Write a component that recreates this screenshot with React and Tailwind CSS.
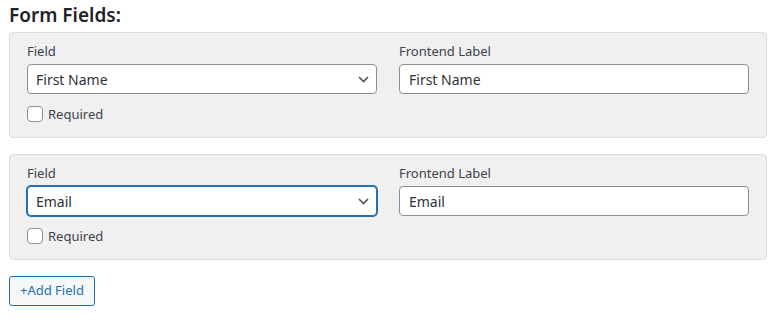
const fields = [
  { field: "First Name", label: "First Name", focused: false },
  { field: "Email", label: "Email", focused: true },
];

function Chevron() {
  return (
    <svg width="11" height="7" viewBox="0 0 11 7" className="shrink-0">
      <polyline points="1,1 5.5,5.5 10,1" fill="none" stroke="#50575e" strokeWidth="1.7" />
    </svg>
  );
}

function FieldRow({ field, label, focused }) {
  return (
    <div className="bg-[#f0f0f1] border border-[#dcdcde] rounded-[4px] px-[17px] pt-[9px] pb-[15px]">
      <div className="grid grid-cols-2 gap-[22px]">
        <div>
          <div className="text-[13px] leading-[18px] text-[#3c434a] mb-[4px]">Field</div>
          <div
            className={
              focused
                ? "h-[30px] bg-white rounded-[4px] border border-[#2271b1] shadow-[0_0_0_1px_#2271b1] flex items-center justify-between pl-[8px] pr-[7px] text-[14px] text-[#2c3338]"
                : "h-[30px] bg-white rounded-[4px] border border-[#8c8f94] flex items-center justify-between pl-[8px] pr-[7px] text-[14px] text-[#2c3338]"
            }
          >
            <span>{field}</span>
            <Chevron />
          </div>
        </div>
        <div>
          <div className="text-[13px] leading-[18px] text-[#3c434a] mb-[4px]">Frontend Label</div>
          <div className="h-[30px] bg-white rounded-[4px] border border-[#8c8f94] flex items-center pl-[9px] text-[14px] text-[#2c3338]">
            {label}
          </div>
        </div>
      </div>
      <div className="flex items-center gap-[5px] mt-[12px] h-[16px]">
        <span className="w-[16px] h-[16px] bg-white border border-[#8c8f94] rounded-[4px]" />
        <span className="text-[13px] leading-[16px] text-[#3c434a]">Required</span>
      </div>
    </div>
  );
}

export default function App() {
  return (
    <div className="bg-white min-h-[320px] px-[9px] font-['Noto_Sans',sans-serif]">
      <h2 className="text-[19px] leading-[28px] font-semibold text-[#1d2327] pt-[1px] mb-[3px]">Form Fields:</h2>
      <div className="flex flex-col gap-[16px] w-[758px]">
        {fields.map((f) => (
          <FieldRow key={f.field} {...f} />
        ))}
      </div>
      <button className="mt-[16px] h-[30px] px-[10px] bg-[#f6f7f7] border border-[#2271b1] rounded-[3px] text-[13px] text-[#2271b1]">
        +Add Field
      </button>
    </div>
  );
}
